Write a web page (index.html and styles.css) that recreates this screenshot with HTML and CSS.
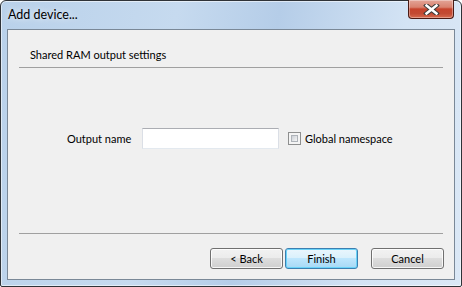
FILE: index.html
```html
<!DOCTYPE html>
<html>
<head>
<meta charset="utf-8">
<link rel="stylesheet" href="styles.css">
</head>
<body>
<div class="window">
  <div class="titlebar">
    <span class="title">Add device...</span>
    <div class="close">
      <svg width="17" height="11" viewBox="0 0 17 11">
        <path d="M3.5 1.5 L13.5 9.5 M13.5 1.5 L3.5 9.5" stroke="#3a3a3a" stroke-width="4.6" stroke-linecap="square" fill="none"/>
        <path d="M3.5 1.5 L13.5 9.5 M13.5 1.5 L3.5 9.5" stroke="#ffffff" stroke-width="2.5" stroke-linecap="square" fill="none"/>
      </svg>
    </div>
  </div>
  <div class="client">
    <div class="header">Shared RAM output settings</div>
    <div class="sep"></div>
    <div class="body">
      <div class="row">
        <label class="lbl">Output name</label>
        <div class="textbox"></div>
        <span class="check"><span class="check-inner"></span></span>
        <span class="check-label">Global namespace</span>
      </div>
    </div>
    <div class="sep"></div>
    <div class="buttons">
      <div class="btn back">&lt; Back</div>
      <div class="btn default finish">Finish</div>
      <div class="btn">Cancel</div>
    </div>
  </div>
</div>
</body>
</html>
```

FILE: styles.css
```css
html, body {
  margin: 0;
  padding: 0;
  background: #ffffff;
}
body {
  font-family: "Segoe UI", Lato, "Noto Sans", sans-serif;
  font-size: 11px;
  color: #000;
  white-space: nowrap;
}
.window {
  width: 462px;
  height: 287px;
  box-sizing: border-box;
  border: 1px solid #2f3338;
  border-radius: 6px 6px 2px 2px;
  background: linear-gradient(100deg, #b9d1ea 0%, #c6daef 35%, #b5cde8 55%, #d3e3f4 80%, #dbe8f6 100%);
  display: flex;
  flex-direction: column;
  padding: 0 6px 6px 6px;
  box-shadow: inset 0 0 0 1px rgba(255,255,255,0.55);
}
.titlebar {
  height: 28px;
  display: flex;
  align-items: flex-start;
  position: relative;
}
.title {
  margin-top: 6px;
  margin-left: 1px;
  font-size: 12.5px;
  color: #000;
  text-shadow: 0 0 6px rgba(255,255,255,0.9);
}
.close {
  position: absolute;
  top: -1px;
  right: 1px;
  width: 46px;
  height: 19px;
  box-sizing: border-box;
  border: 1px solid #4a1a14;
  border-top: none;
  border-radius: 0 0 4px 4px;
  background: linear-gradient(#e3a497 0%, #d9826f 40%, #c6432c 50%, #c24a33 75%, #d66a4e 100%);
  box-shadow: inset 0 0 0 1px rgba(255,255,255,0.35);
  display: flex;
  align-items: center;
  justify-content: center;
}
.close svg { display: block; }
.client {
  flex: 1;
  background: #f0f0f0;
  border: 1px solid #7a8897;
  display: flex;
  flex-direction: column;
}
.header {
  height: 37px;
  box-sizing: border-box;
  padding-left: 22px;
  padding-top: 17px;
  line-height: 16px;
}
.sep {
  height: 1px;
  background: #a0a0a0;
  margin: 0 11px;
}
.body {
  flex: 1;
  padding-top: 60px;
}
.row {
  display: flex;
  align-items: center;
  padding-left: 59px;
  height: 21px;
}
.lbl {
  width: 75px;
}
.textbox {
  width: 137px;
  height: 21px;
  box-sizing: border-box;
  background: #fff;
  border: 1px solid #e3e9ef;
  border-top-color: #abadb3;
  border-left-color: #dbdfe6;
  border-right-color: #dbdfe6;
}
.check {
  margin-left: 9px;
  width: 13px;
  height: 13px;
  box-sizing: border-box;
  border: 1px solid #8e8f8f;
  background: #f4f4f4;
  padding: 2px;
  display: flex;
}
.check-inner {
  flex: 1;
  border: 1px solid #aeb3b9;
  background: linear-gradient(135deg, #cbcfd5, #f6f6f6);
}
.check-label {
  margin-left: 4px;
}
.buttons {
  display: flex;
  justify-content: flex-end;
  padding: 14px 10px 0 0;
  height: 45px;
  box-sizing: border-box;
}
.btn {
  width: 73px;
  height: 21px;
  box-sizing: border-box;
  border: 1px solid #707070;
  border-radius: 3px;
  background: linear-gradient(#f2f2f2 0%, #ebebeb 49%, #dddddd 50%, #cfcfcf 100%);
  box-shadow: inset 0 0 0 1px rgba(255,255,255,0.8);
  display: flex;
  align-items: center;
  justify-content: center;
  line-height: 16px;
}
.back { margin-right: 2px; }
.finish { margin-right: 13px; }
.default {
  border-color: #3c7fb1;
  background: linear-gradient(#eaf6fd 0%, #d9f0fc 49%, #bee6fd 50%, #a7d9f5 100%);
  box-shadow: inset 0 0 0 1px #6ad3f8;
}
```
